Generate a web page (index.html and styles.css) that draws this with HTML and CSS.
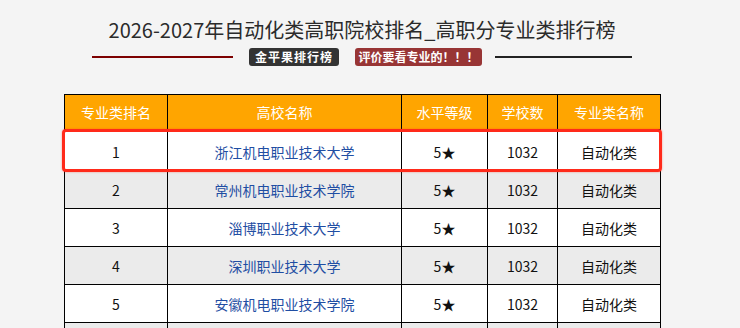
FILE: index.html
```html
<!DOCTYPE html>
<html lang="zh-CN">
<head>
<meta charset="utf-8">
<title>2026-2027年自动化类高职院校排名</title>
<link rel="stylesheet" href="styles.css">
</head>
<body>
<div class="page">
  <h1 class="title">2026-2027年自动化类高职院校排名_高职分专业类排行榜</h1>
  <div class="subbar">
    <span class="line line-red"></span>
    <span class="badge badge-dark">金平果排行榜</span>
    <span class="badge badge-red">评价要看专业的！！！</span>
    <span class="line line-dark"></span>
  </div>
  <div class="table-wrap">
    <table class="rank">
      <colgroup>
        <col class="c1"><col class="c2"><col class="c3"><col class="c4"><col class="c5">
      </colgroup>
      <thead>
        <tr><th>专业类排名</th><th>高校名称</th><th>水平等级</th><th>学校数</th><th>专业类名称</th></tr>
      </thead>
      <tbody>
        <tr class="hl"><td>1</td><td class="school">浙江机电职业技术大学</td><td>5★</td><td>1032</td><td>自动化类</td></tr>
        <tr class="alt"><td>2</td><td class="school">常州机电职业技术学院</td><td>5★</td><td>1032</td><td>自动化类</td></tr>
        <tr><td>3</td><td class="school">淄博职业技术大学</td><td>5★</td><td>1032</td><td>自动化类</td></tr>
        <tr class="alt"><td>4</td><td class="school">深圳职业技术大学</td><td>5★</td><td>1032</td><td>自动化类</td></tr>
        <tr><td>5</td><td class="school">安徽机电职业技术学院</td><td>5★</td><td>1032</td><td>自动化类</td></tr>
        <tr class="alt"><td></td><td></td><td></td><td></td><td></td></tr>
      </tbody>
    </table>
    <div class="highlight"></div>
  </div>
</div>
</body>
</html>
```

FILE: styles.css
```css
html, body {
  margin: 0;
  padding: 0;
  background: #f4f4f4;
  overflow: hidden;
}
body {
  font-family: "Noto Sans CJK SC", "Noto Sans", sans-serif;
  color: #222;
}
.page {
  width: 724px;
}
.title {
  margin: 0;
  padding-top: 16px;
  font-size: 20px;
  line-height: 28px;
  font-weight: normal;
  color: #2b2b2b;
  text-align: center;
}
.subbar {
  margin-top: 4px;
  height: 18px;
  display: flex;
  align-items: center;
  justify-content: center;
}
.line {
  display: block;
  height: 2px;
}
.line-red {
  width: 141px;
  background: #7d0000;
  margin-right: 16px;
}
.line-dark {
  width: 137px;
  background: #222;
  margin-left: 13px;
}
.badge {
  display: block;
  height: 18px;
  line-height: 18px;
  font-size: 12px;
  font-weight: bold;
  color: #fff;
  text-align: center;
  border-radius: 3px;
}
.badge-dark {
  width: 90px;
  background: #333;
  letter-spacing: 1px;
  margin-right: 16px;
}
.badge-red {
  width: 127px;
  background: #983535;
}
.table-wrap {
  position: relative;
  width: 596px;
  margin: 28px 0 0 64px;
}
.rank {
  width: 596px;
  border-collapse: collapse;
  table-layout: fixed;
  font-size: 14px;
}
.c1 { width: 103px; }
.c2 { width: 234px; }
.c3 { width: 86px; }
.c4 { width: 70px; }
.c5 { width: 103px; }
.rank th, .rank td {
  border: 1px solid #000;
  text-align: center;
  vertical-align: middle;
  padding: 0;
}
.rank th {
  background: #ffa500;
  color: #fff;
  font-weight: normal;
  height: 34px;
}
.rank td {
  height: 37px;
  background: #fff;
  color: #111;
}
.rank tr.alt td {
  background: #ebebeb;
}
.rank tr.hl td {
  height: 37px;
  padding-top: 3px;
}
.rank td.school {
  color: #1f4ea3;
}
.highlight {
  position: absolute;
  left: -2px;
  top: 35px;
  width: 600px;
  height: 43px;
  box-sizing: border-box;
  border: 3px solid #ff2a1a;
  border-radius: 4px;
  box-shadow: 0 0 2px rgba(255, 40, 20, 0.5);
  pointer-events: none;
}
```
